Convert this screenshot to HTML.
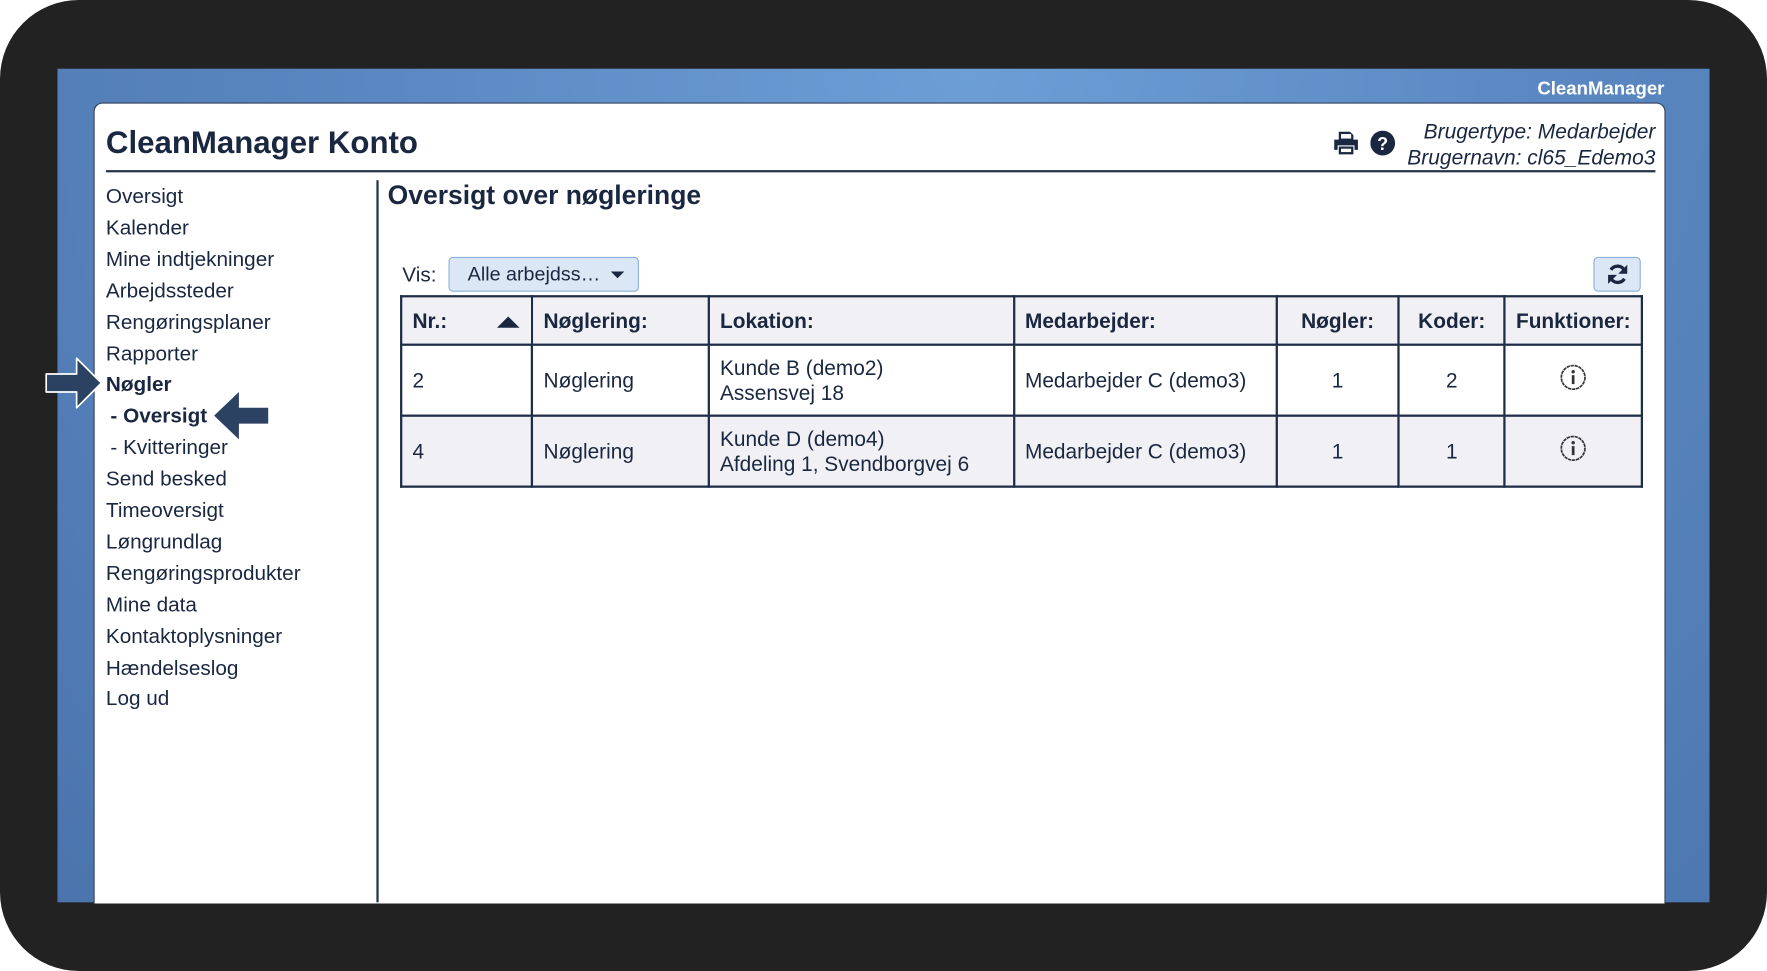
<!DOCTYPE html>
<html><head><meta charset="utf-8">
<style>
html,body{margin:0;padding:0;background:#fff;overflow:hidden}
#s{width:1568px;height:862px;position:relative;transform:scale(1.1269,1.1265);transform-origin:0 0;font-family:"Liberation Sans",Arial,sans-serif;color:#1a2740}
.abs{position:absolute}
#dark{left:0;top:0;width:1568px;height:862px;background:#222223;border-radius:70px}
#blue{left:51px;top:61px;width:1466px;height:740px;background:radial-gradient(ellipse at 55% 0%,#6d9ed6 0%,#5b88c2 45%,#4b74ad 100%)}
#brand{right:91px;top:70px;color:#fff;font-weight:bold;font-size:16.5px}
#panel{left:83px;top:91px;width:1393px;height:710px;background:#fff;border:1px solid #30405a;border-bottom:none;border-radius:8px 8px 0 0}
.nav{left:94px;font-size:18.4px;line-height:20px}
th,td{border:2px solid #1e2d45;font-size:18.5px;text-align:left;padding:0 9px}
th{height:41px;background:#f0f0f5}
table{border-collapse:collapse;position:absolute;left:355px;top:262px;width:1103px}
.c{text-align:center}
</style></head><body>
<div id="s">
<div id="dark" class="abs"></div>
<div id="blue" class="abs"></div>
<div id="brand" class="abs">CleanManager</div>
<div id="panel" class="abs"></div>
<div class="abs" style="left:94px;top:111px;font-size:27.7px;font-weight:bold">CleanManager Konto</div>
<div class="abs" style="left:94px;top:151px;width:1375px;height:2px;background:#25344d"></div>
<div class="abs" style="right:99px;top:105px;font-size:18.6px;font-style:italic;text-align:right;line-height:23px">Brugertype: Medarbejder<br>Brugernavn: cl65_Edemo3</div>
<svg class="abs" style="left:1183px;top:116px" width="23" height="22" viewBox="0 0 23 22"><path d="M5 1h10l3 3v4H5z M1 8h21v9h-3v-4H4v4H1z M5 14h13v7H5z" fill="#1a2740"/><rect x="7" y="3" width="9" height="4" fill="#fff"/><rect x="7" y="16" width="9" height="3" fill="#fff"/></svg>
<svg class="abs" style="left:1216px;top:116px" width="22" height="22" viewBox="0 0 22 22"><circle cx="11" cy="11" r="11" fill="#1a2740"/><text x="11" y="17" font-size="16" font-weight="bold" fill="#fff" text-anchor="middle" font-family="Liberation Sans">?</text></svg>
<div class="abs nav" style="top:164px">Oversigt</div>
<div class="abs nav" style="top:192px">Kalender</div>
<div class="abs nav" style="top:220px">Mine indtjekninger</div>
<div class="abs nav" style="top:248px">Arbejdssteder</div>
<div class="abs nav" style="top:276px">Rengøringsplaner</div>
<div class="abs nav" style="top:304px">Rapporter</div>
<div class="abs nav" style="top:331px;font-weight:bold">Nøgler</div>
<div class="abs nav" style="top:359px;left:98px;font-weight:bold">- Oversigt</div>
<div class="abs nav" style="top:387px;left:98px">- Kvitteringer</div>
<div class="abs nav" style="top:415px">Send besked</div>
<div class="abs nav" style="top:443px">Timeoversigt</div>
<div class="abs nav" style="top:471px">Løngrundlag</div>
<div class="abs nav" style="top:499px">Rengøringsprodukter</div>
<div class="abs nav" style="top:527px">Mine data</div>
<div class="abs nav" style="top:555px">Kontaktoplysninger</div>
<div class="abs nav" style="top:583px">Hændelseslog</div>
<div class="abs nav" style="top:610px">Log ud</div>
<svg class="abs" style="left:38px;top:315px" width="56" height="50" viewBox="0 0 56 50"><path d="M3 17h27V3l22 22-22 22V33H3z" fill="#2b4263" stroke="#ffffff" stroke-width="1.5" stroke-linejoin="round"/></svg>
<svg class="abs" style="left:188px;top:346px" width="52" height="46" viewBox="0 0 52 46"><path d="M2 23L24 2v14h26v14H24v14z" fill="#2b4263"/></svg>
<div class="abs" style="left:334px;top:160px;width:2px;height:641px;background:#25344d"></div>
<div class="abs" style="left:344px;top:160px;font-size:23.5px;font-weight:bold">Oversigt over nøgleringe</div>
<div class="abs" style="left:357px;top:233px;font-size:18.4px">Vis:</div>
<div class="abs" style="left:398px;top:228px;width:169px;height:31px;background:#dce7f5;border:1px solid #8cb0dc;border-radius:4px;box-sizing:border-box;font-size:17.5px;line-height:29px;padding-left:16px">Alle arbejdss…<span style="position:absolute;left:143px;top:12px;border-left:6px solid transparent;border-right:6px solid transparent;border-top:6px solid #1a2740"></span></div>
<div class="abs" style="left:1414px;top:228px;width:42px;height:31px;background:#dce7f5;border:1px solid #8cb0dc;border-radius:4px;box-sizing:border-box"><svg style="position:absolute;left:10px;top:4px" width="21" height="21" viewBox="0 0 21 21"><path d="M17 8A7 7 0 0 0 4.5 6.5" fill="none" stroke="#1a2740" stroke-width="3"/><path d="M19 2v8h-8z" fill="#1a2740"/><path d="M4 13a7 7 0 0 0 12.5 1.5" fill="none" stroke="#1a2740" stroke-width="3"/><path d="M2 19v-8h8z" fill="#1a2740"/></svg></div>
<table>
<tr><th style="width:97px;position:relative">Nr.:<span style="position:absolute;left:84px;top:17px;border-left:10px solid transparent;border-right:10px solid transparent;border-bottom:10px solid #1a2740"></span></th><th style="width:137px">Nøglering:</th><th style="width:252px">Lokation:</th><th style="width:214px">Medarbejder:</th><th class="c" style="width:89px">Nøgler:</th><th class="c" style="width:74px">Koder:</th><th class="c">Funktioner:</th></tr>
<tr style="height:63px"><td>2</td><td>Nøglering</td><td>Kunde B (demo2)<br>Assensvej 18</td><td>Medarbejder C (demo3)</td><td class="c">1</td><td class="c">2</td><td class="c"><svg width="24" height="24" viewBox="0 0 24 24"><circle cx="12" cy="12" r="10.5" fill="none" stroke="#333" stroke-width="1.5" stroke-dasharray="3 0.6"/><circle cx="12" cy="7" r="1.5" fill="#333"/><rect x="10.8" y="10" width="2.4" height="8" fill="#333"/></svg></td></tr>
<tr style="height:63px;background:#f0f0f5"><td>4</td><td>Nøglering</td><td>Kunde D (demo4)<br>Afdeling 1, Svendborgvej 6</td><td>Medarbejder C (demo3)</td><td class="c">1</td><td class="c">1</td><td class="c"><svg width="24" height="24" viewBox="0 0 24 24"><circle cx="12" cy="12" r="10.5" fill="none" stroke="#333" stroke-width="1.5" stroke-dasharray="3 0.6"/><circle cx="12" cy="7" r="1.5" fill="#333"/><rect x="10.8" y="10" width="2.4" height="8" fill="#333"/></svg></td></tr>
</table>
</div>
</body></html>
